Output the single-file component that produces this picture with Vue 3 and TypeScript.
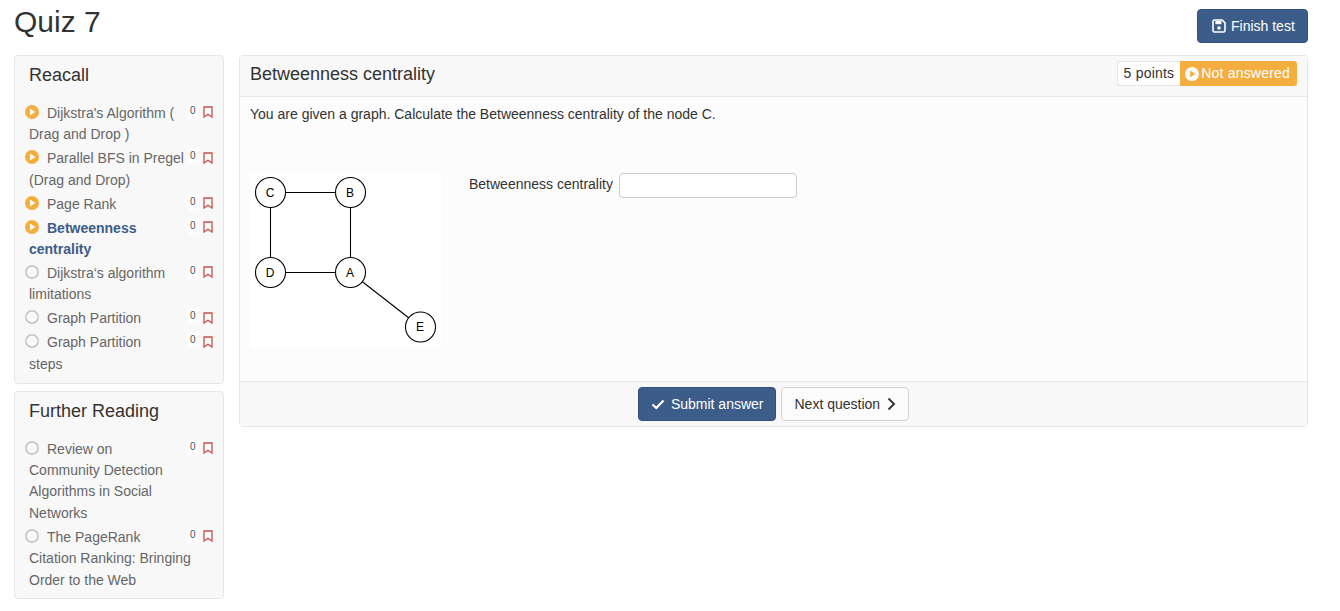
<script setup lang="ts">
interface Item {
  title: string;
  started: boolean;
  active?: boolean;
}

const recall: Item[] = [
  { title: "Dijkstra's Algorithm ( Drag and Drop )", started: true },
  { title: "Parallel BFS in Pregel (Drag and Drop)", started: true },
  { title: "Page Rank", started: true },
  { title: "Betweenness centrality", started: true, active: true },
  { title: "Dijkstra‘s algorithm limitations", started: false },
  { title: "Graph Partition", started: false },
  { title: "Graph Partition\nsteps", started: false },
];

const reading: Item[] = [
  { title: "Review on Community Detection Algorithms in Social Networks", started: false },
  { title: "The PageRank Citation Ranking: Bringing Order to the Web", started: false },
];

const groups = [
  { name: "Reacall", items: recall },
  { name: "Further Reading", items: reading },
];

const nodes = [
  { id: "C", x: 20.5, y: 20.5 },
  { id: "B", x: 100.5, y: 20.5 },
  { id: "D", x: 20.5, y: 100.5 },
  { id: "A", x: 100.5, y: 100.5 },
  { id: "E", x: 170.5, y: 155 },
];
</script>

<template>
  <div class="page">
    <header class="top">
      <h1>Quiz 7</h1>
      <button class="btn primary finish" type="button">
        <svg class="save" viewBox="0 0 14 14" width="14" height="14">
          <path d="M2.500 1h7.600L13 3.900v7.600a1.500 1.500 0 0 1-1.500 1.500h-9A1.500 1.500 0 0 1 1 11.500v-9A1.500 1.500 0 0 1 2.500 1z" fill="none" stroke="currentColor" stroke-width="1.6" />
          <rect x="3.400" y="2" width="6" height="3.200" fill="currentColor" />
          <circle cx="7" cy="9" r="1.800" fill="currentColor" />
        </svg>
        Finish test
      </button>
    </header>

    <div class="columns">
      <aside class="side">
        <section v-for="g in groups" :key="g.name" class="card">
          <h3>{{ g.name }}</h3>
          <div v-for="it in g.items" :key="it.title" class="item" :class="{ active: it.active }">
            <div class="actions">
              <span class="count">0</span>
              <svg class="mark" viewBox="0 0 10 12" width="10" height="12">
                <path d="M1 1h8v10L5 8.200 1 11z" fill="none" stroke="#c4524c" stroke-width="1.3" />
              </svg>
            </div>
            <svg class="status" viewBox="0 0 14 14" width="14" height="14">
              <template v-if="it.started">
                <circle cx="7" cy="7" r="7" fill="#f4ad3f" />
                <path d="M5.400 4.200 9.800 7 5.400 9.800z" fill="#fff" stroke="#fff" stroke-width="0.8" stroke-linejoin="round" />
              </template>
              <circle v-else cx="7" cy="7" r="6.200" fill="none" stroke="#c2c2c2" stroke-width="1.5" />
            </svg>
            <span class="name">{{ it.title }}</span>
          </div>
        </section>
      </aside>

      <main class="card question">
        <div class="q-head">
          <h2>Betweenness centrality</h2>
          <div class="tags">
            <span class="points">5 points</span>
            <span class="state">
              <svg viewBox="0 0 14 14" width="14" height="14">
                <circle cx="7" cy="7" r="7" fill="#fff" />
                <path d="M5.400 4.200 9.800 7 5.400 9.800z" fill="#f4ad3f" stroke="#f4ad3f" stroke-width="0.8" stroke-linejoin="round" />
              </svg>
              Not answered
            </span>
          </div>
        </div>
        <div class="q-body">
          <p>You are given a graph. Calculate the Betweenness centrality of the node C.</p>
          <div class="task">
            <svg class="graph" viewBox="0 0 191 177" width="191" height="177">
              <rect width="191" height="177" fill="#fff" />
              <g stroke="#000" stroke-width="1.1">
                <line x1="20.5" y1="20.5" x2="100.5" y2="20.5" />
                <line x1="20.5" y1="20.5" x2="20.5" y2="100.5" />
                <line x1="100.5" y1="20.5" x2="100.5" y2="100.5" />
                <line x1="20.5" y1="100.5" x2="100.5" y2="100.5" />
                <line x1="100.5" y1="100.5" x2="170.5" y2="155" />
              </g>
              <g v-for="n in nodes" :key="n.id">
                <circle :cx="n.x" :cy="n.y" r="15" fill="#fff" stroke="#000" stroke-width="1.1" />
                <text :x="n.x - 0.5" :y="n.y + 4" text-anchor="middle" class="node">{{ n.id }}</text>
              </g>
            </svg>
            <label class="field">
              <span>Betweenness centrality</span>
              <input type="text" />
            </label>
          </div>
        </div>
        <div class="q-foot">
          <button class="btn primary" type="button">
            <svg viewBox="0 0 14 14" width="14" height="14">
              <path d="M1.500 7.500 5.300 11 12.500 3.500" fill="none" stroke="currentColor" stroke-width="2.2" />
            </svg>
            Submit answer
          </button>
          <button class="btn plain" type="button">
            Next question
            <svg viewBox="0 0 10 14" width="10" height="14">
              <path d="M2.500 1.500 8 7l-5.500 5.500" fill="none" stroke="currentColor" stroke-width="1.9" />
            </svg>
          </button>
        </div>
      </main>
    </div>
  </div>
</template>

<style>
html,
body {
  margin: 0;
  background: #fff;
}
</style>

<style scoped>
.page {
  padding: 0 32px 0 14px;
  font-family: "Liberation Sans", Arial, sans-serif;
  font-size: 14px;
  color: #333;
}
.top {
  display: flex;
  justify-content: space-between;
  align-items: flex-start;
  height: 55px;
}
h1 {
  margin: 4px 0 0;
  font-size: 30px;
  line-height: 36px;
  font-weight: 400;
}
.btn {
  display: inline-flex;
  align-items: center;
  height: 34px;
  padding: 0 12px;
  border-radius: 4px;
  font: inherit;
  box-sizing: border-box;
  white-space: nowrap;
}
.primary {
  background: #3c5d89;
  border: 1px solid #35527a;
  color: #fff;
}
.finish {
  margin-top: 9px;
  width: 111px;
  padding-left: 14px;
  padding-right: 0;
}
.save {
  margin-right: 5px;
}
.columns {
  display: flex;
  gap: 15px;
  align-items: flex-start;
}
.side {
  width: 210px;
  flex: none;
  display: flex;
  flex-direction: column;
  gap: 7px;
}
.card {
  background: #f8f8f8;
  border: 1px solid #e6e6e6;
  border-radius: 4px;
  box-sizing: border-box;
}
.side .card {
  padding: 9px 9px 5.200px 14px;
}
.side .card + .card {
  padding-bottom: 4px;
}
h3 {
  margin: 0 0 17.700px;
  font-size: 18px;
  line-height: 20px;
  font-weight: 400;
}
.item {
  line-height: 21.400px;
  color: #666;
  margin-bottom: 2.600px;
}
.item::after {
  content: "";
  display: block;
  clear: both;
}
.item.active {
  color: #3c5d89;
  font-weight: 700;
}
.status {
  margin: 0 8px 0 -4px;
  vertical-align: -1px;
}
.name {
  white-space: pre-line;
}
.actions {
  float: right;
  display: flex;
  align-items: center;
  height: 17px;
  margin-left: 2px;
}
.count {
  width: 12px;
  height: 17px;
  background: #fcfcfc;
  color: #555;
  font-size: 10px;
  font-weight: 400;
  line-height: 15px;
  text-align: left;
  text-indent: 3px;
  margin-right: 4px;
}
.mark {
  margin-top: 2px;
  margin-right: 1px;
}
.question {
  flex: 1;
  background: #fcfcfc;
}
.q-head {
  display: flex;
  justify-content: space-between;
  align-items: flex-start;
  height: 41px;
  box-sizing: border-box;
  padding: 5px 10px 0;
  background: #f8f8f8;
  border-bottom: 1px solid #e6e6e6;
}
h2 {
  margin: 3px 0 0;
  font-size: 18px;
  line-height: 20px;
  font-weight: 400;
}
.tags {
  display: flex;
  height: 25px;
  line-height: 23px;
}
.points {
  padding: 0 6px;
  background: #fff;
  border: 1px solid #e6e6e6;
  border-right: 0;
  border-radius: 3px 0 0 3px;
  letter-spacing: 0.2px;
}
.state {
  display: flex;
  align-items: center;
  gap: 2px;
  padding: 0 7px 0 5px;
  background: #f4ad3f;
  border-radius: 0 3px 3px 0;
  color: #fff;
  letter-spacing: 0.2px;
}
.q-body {
  height: 284px;
  padding: 7px 10px 0;
  box-sizing: border-box;
}
.q-body p {
  margin: 0;
  line-height: 20px;
}
.task {
  display: flex;
  margin-top: 48px;
}
.graph {
  display: block;
}
.node {
  font-family: "Liberation Sans", Arial, sans-serif;
  font-size: 12px;
  fill: #000;
}
.field {
  display: flex;
  align-items: center;
  gap: 6px;
  height: 26px;
  margin-left: 28px;
}
.field span {
  margin-top: -2px;
}
.field input {
  width: 178px;
  height: 25px;
  box-sizing: border-box;
  border: 1px solid #ccc;
  border-radius: 4px;
  background: #fff;
  padding: 0 6px;
  outline: none;
}
.q-foot {
  display: flex;
  justify-content: center;
  gap: 5px;
  height: 45px;
  padding-top: 5px;
  box-sizing: border-box;
  background: #f8f8f8;
  border-top: 1px solid #e6e6e6;
}
.q-foot .primary svg {
  margin-right: 6px;
}
.plain {
  background: #fbfbfb;
  border: 1px solid #d2d2d2;
  color: #333;
}
.plain svg {
  margin-left: 6px;
}
</style>
